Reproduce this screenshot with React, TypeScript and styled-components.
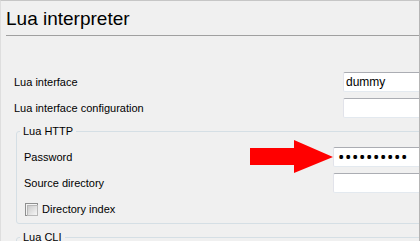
import React from "react";
import styled, { createGlobalStyle } from "styled-components";

const GlobalStyle = createGlobalStyle`
  html, body {
    margin: 0;
    padding: 0;
    background: #f0f0f0;
  }
  * {
    box-sizing: border-box;
  }
`;

const Page = styled.div`
  position: relative;
  width: 420px;
  height: 241px;
  overflow: hidden;
  background: #f0f0f0;
  border-top: 1px solid #c6c6c6;
  border-left: 1px solid #dedede;
  border-right: 1px solid #b4b4b4;
  font-family: "Liberation Sans", Arial, sans-serif;
  font-size: 11px;
  color: #000;
`;

const Header = styled.div`
  height: 34px;
  padding: 8px 0 0 5px;
`;

const Title = styled.h1`
  margin: 0;
  font-size: 19px;
  line-height: 20px;
  font-weight: 400;
`;

const Separator = styled.div`
  height: 1px;
  margin-left: 5px;
  background: #a0a0a0;
`;

const Body = styled.div`
  padding: 36px 0 0 13px;
`;

const Form = styled.div<{ $labelWidth: number }>`
  display: grid;
  grid-template-columns: ${(p) => p.$labelWidth}px 110px;
  grid-auto-rows: 20px;
  row-gap: 6px;
  align-items: center;
`;

const Label = styled.label`
  white-space: nowrap;
  line-height: 14px;
  padding-bottom: 1px;
`;

const TextBox = styled.input<{ $secret?: boolean }>`
  width: 110px;
  height: 20px;
  margin: 0;
  padding: 0 0 1px ${(p) => (p.$secret ? 4 : 2)}px;
  background: #fff;
  border: 1px solid #e2e3ea;
  border-top-color: #abadb3;
  border-bottom-color: #e3e9ef;
  border-radius: 2px;
  font-family: ${(p) => (p.$secret ? '"Noto Sans", sans-serif' : '"Liberation Sans", Arial, sans-serif')};
  font-size: ${(p) => (p.$secret ? 17 : 12)}px;
  letter-spacing: ${(p) => (p.$secret ? "0.6px" : "0")};
  color: #000;
  outline: none;
`;

const Group = styled.fieldset`
  width: 440px;
  margin: 5px 0 0 2px;
  padding: 8px 0 4px 7px;
  border: 1px solid #d5dfe5;
  border-radius: 3px;
  min-width: 0;
`;

const Legend = styled.legend`
  margin-left: -4px;
  padding: 0 3px;
  line-height: 16px;
`;

const CheckRow = styled.label`
  display: flex;
  align-items: center;
  gap: 4px;
  padding-left: 1px;
  white-space: nowrap;
  grid-column: 1 / -1;
`;

const CheckBox = styled.span`
  width: 13px;
  height: 13px;
  border: 1px solid #8e8f8f;
  background: #f4f4f4;
  padding: 1px;
  &::before {
    content: "";
    display: block;
    width: 100%;
    height: 100%;
    border: 1px solid #b8b8b8;
    background: linear-gradient(135deg, #cbcbcb, #f6f6f6);
  }
`;

const Arrow = styled.svg`
  position: absolute;
  left: 248px;
  top: 138px;
`;

export default function App() {
  return (
    <>
      <GlobalStyle />
      <Page>
        <Header>
          <Title>Lua interpreter</Title>
        </Header>
        <Separator />
        <Body>
          <Form $labelWidth={329}>
            <Label>Lua interface</Label>
            <TextBox readOnly value="dummy" />
            <Label>Lua interface configuration</Label>
            <TextBox readOnly value="" />
          </Form>
          <Group>
            <Legend>Lua HTTP</Legend>
            <Form $labelWidth={309}>
              <Label>Password</Label>
              <TextBox type="password" $secret readOnly value="0123456789" />
              <Label>Source directory</Label>
              <TextBox readOnly value="" />
              <CheckRow>
                <CheckBox />
                Directory index
              </CheckRow>
            </Form>
          </Group>
          <Group>
            <Legend>Lua CLI</Legend>
            <Form $labelWidth={309}>
              <Label>Command line</Label>
              <TextBox readOnly value="" />
            </Form>
          </Group>
        </Body>
        <Arrow width="86" height="36" viewBox="0 0 86 36">
          <polygon points="1,9 45,9 45,1 84,18 45,34 45,26 1,26" fill="#ff0000" />
        </Arrow>
      </Page>
    </>
  );
}
